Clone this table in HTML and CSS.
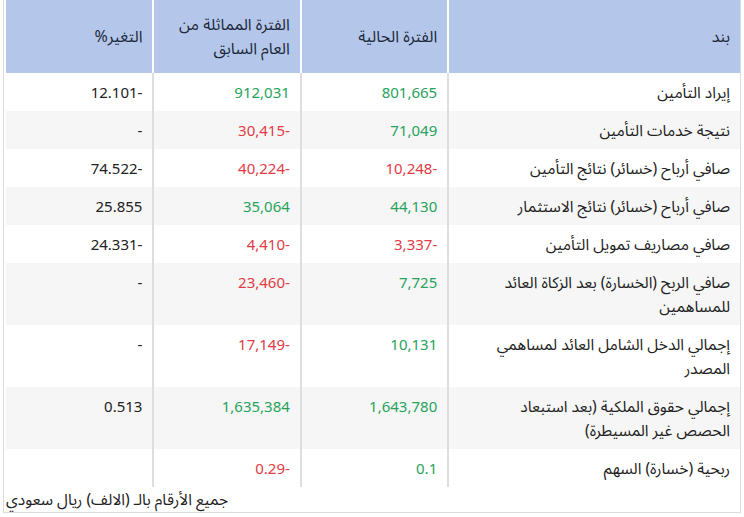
FILE: index.html
```html
<!DOCTYPE html>
<html lang="ar" dir="rtl">
<head>
<meta charset="utf-8">
<title>جدول</title>
<link rel="stylesheet" href="styles.css">
</head>
<body>
<div class="frame">
  <table class="fin">
    <colgroup>
      <col class="c-item">
      <col class="c-num">
      <col class="c-num">
      <col class="c-num">
    </colgroup>
    <thead>
      <tr>
        <th>بند</th>
        <th>الفترة الحالية</th>
        <th>الفترة المماثلة من العام السابق</th>
        <th>التغير%</th>
      </tr>
    </thead>
    <tbody>
      <tr>
        <td class="label">إيراد التأمين</td>
        <td class="pos">801,665</td>
        <td class="pos">912,031</td>
        <td>-12.101</td>
      </tr>
      <tr>
        <td class="label">نتيجة خدمات التأمين</td>
        <td class="pos">71,049</td>
        <td class="neg">-30,415</td>
        <td>-</td>
      </tr>
      <tr>
        <td class="label">صافي أرباح (خسائر) نتائج التأمين</td>
        <td class="neg">-10,248</td>
        <td class="neg">-40,224</td>
        <td>-74.522</td>
      </tr>
      <tr>
        <td class="label">صافي أرباح (خسائر) نتائج الاستثمار</td>
        <td class="pos">44,130</td>
        <td class="pos">35,064</td>
        <td>25.855</td>
      </tr>
      <tr>
        <td class="label">صافي مصاريف تمويل التأمين</td>
        <td class="neg">-3,337</td>
        <td class="neg">-4,410</td>
        <td>-24.331</td>
      </tr>
      <tr>
        <td class="label">صافي الربح (الخسارة) بعد الزكاة العائد للمساهمين</td>
        <td class="pos">7,725</td>
        <td class="neg">-23,460</td>
        <td>-</td>
      </tr>
      <tr>
        <td class="label">إجمالي الدخل الشامل العائد لمساهمي المصدر</td>
        <td class="pos">10,131</td>
        <td class="neg">-17,149</td>
        <td>-</td>
      </tr>
      <tr>
        <td class="label">إجمالي حقوق الملكية (بعد استبعاد الحصص غير المسيطرة)</td>
        <td class="pos">1,643,780</td>
        <td class="pos">1,635,384</td>
        <td>0.513</td>
      </tr>
      <tr>
        <td class="label">ربحية (خسارة) السهم</td>
        <td class="pos">0.1</td>
        <td class="neg">-0.29</td>
        <td></td>
      </tr>
    </tbody>
  </table>
  <div class="note">جميع الأرقام بالـ (الالف) ريال سعودي</div>
</div>
</body>
</html>
```

FILE: styles.css
```css
html, body {
  margin: 0;
  padding: 0;
  background: #ffffff;
}

body {
  font-family: "Noto Sans", "Noto Sans Arabic", "DejaVu Sans", sans-serif;
  font-size: 15px;
  color: #222222;
}

.frame {
  margin: 0 3px 0 3px;
  border: 1px solid #dcdcdc;
  border-top: none;
  width: 736px;
}

.fin {
  width: 734px;
  margin-left: 2px;
  border-collapse: collapse;
  table-layout: fixed;
}

.c-item { width: 291px; }
.c-num { width: 147px; }

.fin th {
  background: #b4c7eb;
  color: #1c2a3a;
  font-weight: 400;
  font-size: 16px;
  text-align: right;
  vertical-align: middle;
  line-height: 24px;
  padding: 12px 10px 13px 10px;
  border-left: 2px solid #ffffff;
}

.fin td {
  text-align: right;
  vertical-align: top;
  line-height: 24px;
  padding: 7px 10px 7px 10px;
  border-left: 2px solid #dedede;
}

.fin td.label {
  font-size: 15.6px;
  padding-left: 22px;
}

.fin th:last-child,
.fin td:last-child {
  border-left: none;
}

.fin tbody tr:nth-child(even) td {
  background: #f6f6f6;
}

.pos { color: #27a35c; }
.neg { color: #e23b45; }

.note {
  text-align: left;
  padding: 0 2px;
  font-size: 15.6px;
  line-height: 25px;
  height: 25px;
}
```
